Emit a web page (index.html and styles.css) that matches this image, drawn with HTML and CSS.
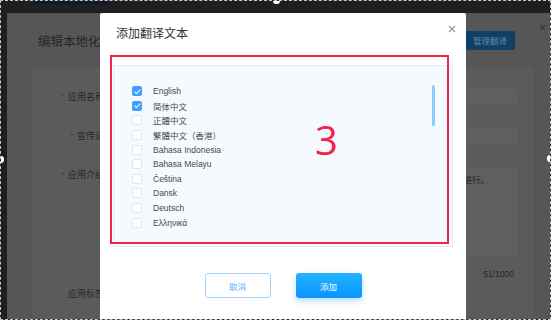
FILE: index.html
```html
<!DOCTYPE html>
<html lang="zh-CN">
<head>
    <meta charset="UTF-8">
    <meta name="viewport" content="width=device-width, initial-scale=1.0">
    <title>添加翻译文本</title>
    <link rel="stylesheet" href="styles.css">
</head>
<body>
    <div class="shot">
        <div class="top-strip"><span class="nav-tab"></span></div>
        <div class="page">
            <div class="page-head">
                <div class="page-title">编辑本地化信息</div>
                <button class="manage-btn">管理翻译</button>
                <span class="page-close">×</span>
            </div>
            <div class="card">
                <div class="form-row">
                    <label class="form-label"><i>*</i>应用名称</label>
                    <div class="fake-input"></div>
                </div>
                <div class="form-row">
                    <label class="form-label"><i>*</i>宣传语</label>
                    <div class="fake-input"></div>
                </div>
                <div class="form-row">
                    <label class="form-label"><i>*</i>应用介绍</label>
                    <div class="fake-textarea">本应用内容的本地化翻译与审核工作由专人进行。</div>
                </div>
                <div class="counter">51/1000</div>
                <div class="form-row">
                    <label class="form-label">应用标签</label>
                </div>
            </div>
        </div>

        <div class="modal">
            <div class="modal-head">
                <span class="modal-title">添加翻译文本</span>
                <span class="modal-close">
                    <svg width="8" height="8" viewBox="0 0 8 8"><path d="M1 1L7 7M7 1L1 7" stroke="#9a9a9a" stroke-width="1.2"/></svg>
                </span>
            </div>
            <div class="lang-panel">
                <ul class="lang-list" id="langList"></ul>
                <span class="scroll-thumb"></span>
            </div>
            <div class="modal-foot">
                <button class="btn btn-cancel">取消</button>
                <button class="btn btn-primary">添加</button>
            </div>
            <div class="mark-box"><span class="mark-num">3</span></div>
        </div>

        <span class="handle handle-top"></span>
        <span class="handle handle-left"></span>
        <span class="handle handle-right"></span>
        <span class="handle handle-bottom"></span>
    </div>
    <script>
    // language list
    const langs = [
        ['English', true],
        ['简体中文', true],
        ['正體中文', false],
        ['繁體中文（香港）', false],
        ['Bahasa Indonesia', false],
        ['Bahasa Melayu', false],
        ['Čeština', false],
        ['Dansk', false],
        ['Deutsch', false],
        ['Ελληνικά', false]
    ];
    const list = document.getElementById('langList');
    langs.forEach(([name, checked]) => {
        const li = document.createElement('li');
        li.className = 'lang-item';
        const box = document.createElement('span');
        box.className = checked ? 'check checked' : 'check';
        const text = document.createElement('span');
        text.textContent = name;
        li.appendChild(box);
        li.appendChild(text);
        list.appendChild(li);
    });
    </script>
</body>
</html>
```

FILE: styles.css
```css
body {
    margin: 0;
    background: #fff;
    font-family: "Liberation Sans", "Noto Sans CJK SC", sans-serif;
    overflow: hidden;
}
.shot {
    position: relative;
    width: 551px;
    height: 320px;
    box-sizing: border-box;
    border: 1px dashed #c8c8c8;
    background: #1f1f1f;
    display: flex;
    flex-direction: column;
    padding-left: 6px;
    overflow: hidden;
}
.top-strip {
    height: 12px;
    flex-shrink: 0;
}
.nav-tab {
    display: block;
    width: 75px;
    height: 3px;
    margin-left: 26px;
    background: #0e1b2c;
}
.page {
    flex: 1;
    background: #565656;
    padding-left: 25px;
    display: flex;
    flex-direction: column;
}
.page-head {
    height: 54px;
    display: flex;
    align-items: center;
    padding-left: 6px;
}
.page-title {
    font-size: 12.5px;
    color: #262626;
    flex: 1;
}
.manage-btn {
    width: 50px;
    height: 19px;
    border: none;
    border-radius: 2px;
    background: #114066;
    color: #6787a1;
    font-family: inherit;
    font-size: 8.5px;
    padding: 0;
    margin-right: 24px;
}
.page-close {
    align-self: flex-start;
    margin-top: 8px;
    margin-right: 4px;
    font-size: 12px;
    color: #2c2c2c;
}
.card {
    flex: 1;
    margin-right: 17px;
    background: #5b5b5b;
    padding: 22px 15px 0 0;
}
.form-row {
    display: flex;
    align-items: flex-start;
    margin-bottom: 23px;
}
.form-label {
    width: 72px;
    flex-shrink: 0;
    text-align: right;
    font-size: 9px;
    line-height: 16px;
    color: #262626;
    margin-right: 12px;
}
.form-label i {
    font-style: normal;
    color: #7a2d2d;
    margin-right: 3px;
}
.fake-input {
    flex: 1;
    height: 16px;
    background: #5f5f5f;
    border-radius: 2px;
}
.fake-textarea {
    flex: 1;
    height: 90px;
    background: #5f5f5f;
    border-radius: 2px;
    font-size: 8.5px;
    color: #262626;
    text-align: right;
    padding: 6px 29px 0 0;
    box-sizing: border-box;
}
.form-row:nth-child(3) {
    margin-bottom: 12px;
}
.counter {
    text-align: right;
    font-size: 8.5px;
    color: #262626;
    padding-right: 4px;
    margin-bottom: 7px;
}

/* modal */
.modal {
    position: absolute;
    left: 99px;
    top: 12px;
    width: 366px;
    height: 320px;
    background: #fff;
    border-radius: 2px;
}
.modal-head {
    height: 38px;
    display: flex;
    align-items: center;
    justify-content: space-between;
    padding: 0 10px 0 16px;
}
.modal-title {
    font-size: 12px;
    color: #333;
}
.modal-close {
    display: flex;
    margin-top: -6px;
}
.lang-panel {
    position: relative;
    margin: 14px 13px 0;
    height: 182px;
    box-sizing: border-box;
    background: #f5faff;
    border: 1px solid #e6ecf3;
    padding: 18px 0 0 18px;
}
.lang-list {
    list-style: none;
    margin: 0;
    padding: 0;
}
.lang-item {
    height: 14.6px;
    display: flex;
    align-items: center;
    gap: 11px;
    font-size: 8.5px;
    color: #4a4a4a;
}
.check {
    position: relative;
    width: 10px;
    height: 10px;
    box-sizing: border-box;
    border: 1px solid #e3e6eb;
    border-radius: 2px;
    background: #fff;
}
.check.checked {
    background: #409eff;
    border-color: #409eff;
}
.check.checked::after {
    content: "";
    position: absolute;
    left: 2.5px;
    top: 0.5px;
    width: 2px;
    height: 5px;
    border: solid #fff;
    border-width: 0 1px 1px 0;
    transform: rotate(45deg);
}
.scroll-thumb {
    position: absolute;
    right: 17px;
    top: 19px;
    width: 3px;
    height: 41px;
    border-radius: 2px;
    background: #8ccbff;
}
.modal-foot {
    display: flex;
    justify-content: center;
    gap: 25px;
    margin-top: 26px;
}
.btn {
    width: 66px;
    height: 25px;
    border-radius: 3px;
    font-family: inherit;
    font-size: 8.5px;
    padding: 0;
}
.btn-cancel {
    background: #fff;
    border: 1px solid #a3d2ff;
    color: #5cb0ff;
}
.btn-primary {
    border: none;
    background: linear-gradient(180deg, #22b3ff, #0a93ff);
    color: #fff;
    box-shadow: 0 3px 6px rgba(16, 140, 255, 0.3);
}

/* annotation */
.mark-box {
    position: absolute;
    left: 10px;
    top: 42px;
    width: 339px;
    height: 189px;
    box-sizing: border-box;
    border: 2px solid #f5224a;
}
.mark-num {
    position: absolute;
    left: 203px;
    top: 63px;
    font-family: "Open Sans", sans-serif;
    font-size: 40px;
    line-height: 1;
    color: #f5224a;
}

/* selection handles */
.handle {
    position: absolute;
    width: 7px;
    height: 7px;
    border-radius: 3px;
    background: #fff;
}
.handle-top { left: 272px; top: -4px; }
.handle-bottom { left: 272px; bottom: -4px; }
.handle-left { left: -4px; top: 155px; }
.handle-right { right: -4px; top: 154px; }
```
